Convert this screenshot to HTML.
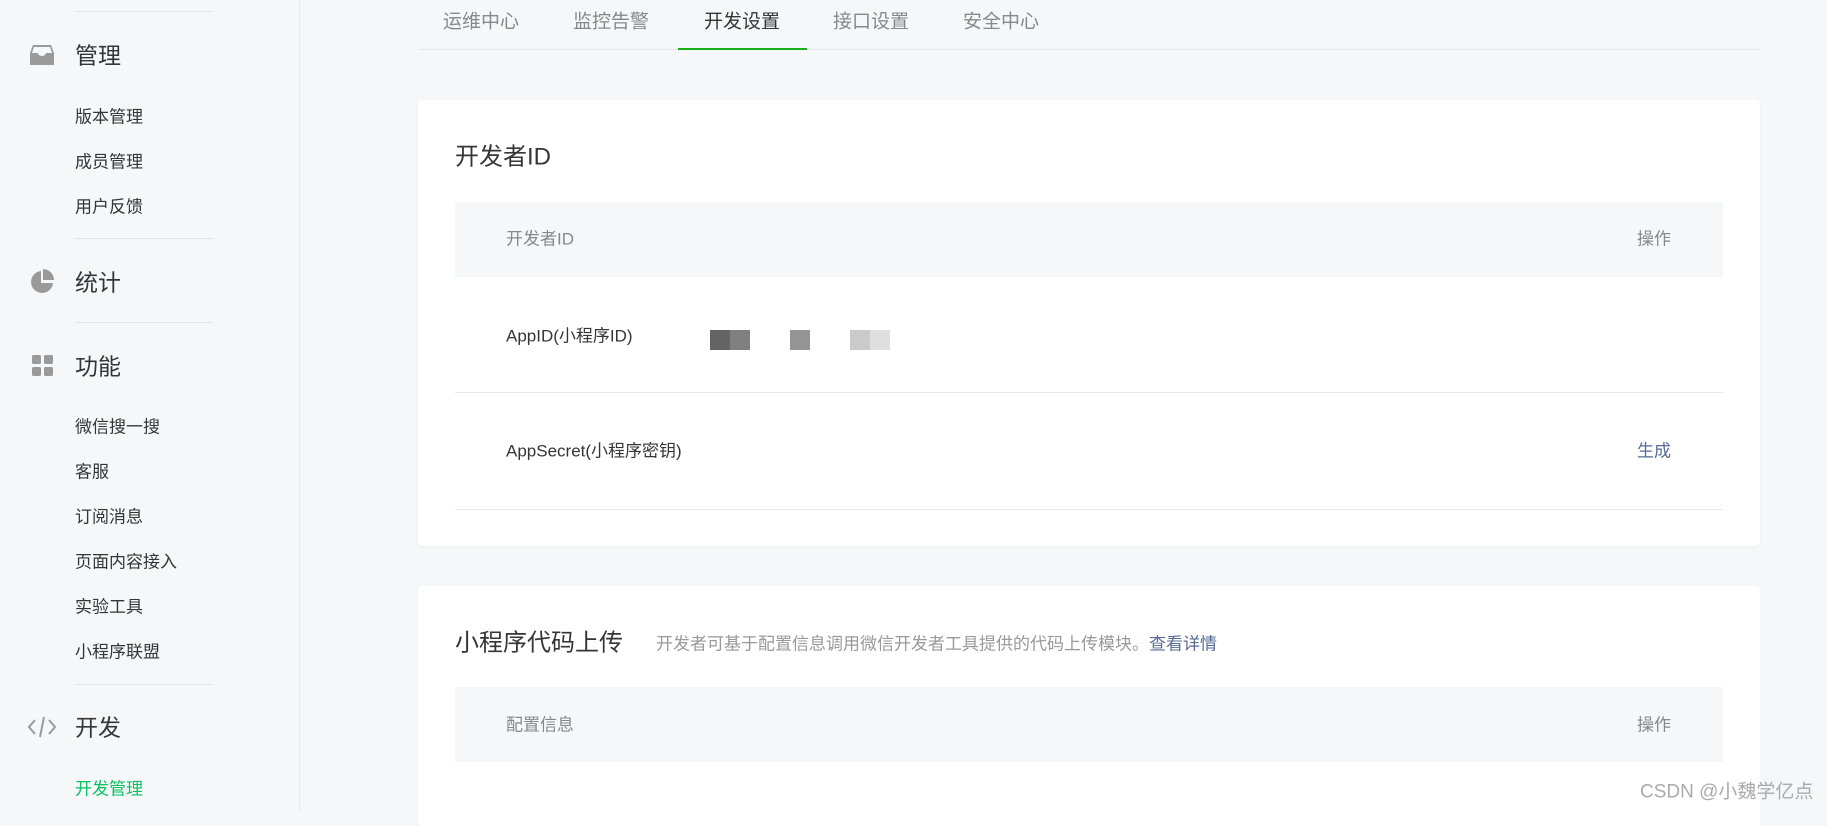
<!DOCTYPE html>
<html><head><meta charset="utf-8"><style>
*{margin:0;padding:0;box-sizing:border-box}
body{width:1827px;height:812px;overflow:hidden;background:#f6f7f9;font-family:"Liberation Sans","Noto Sans CJK SC",sans-serif;position:relative;color:#353535}
.a{position:absolute;white-space:nowrap}
.side{position:absolute;left:0;top:0;width:300px;height:812px;background:#f6f7f9;border-right:1px solid #e7e8eb}
.dv{position:absolute;left:75px;width:138px;height:1px;background:#e3e4e7}
.h{font-size:23px;color:#353535;transform:translateY(-54%)}
.s{font-size:17px;color:#353535;transform:translateY(-58%)}
.t{font-size:19px;color:#888;transform:translateY(-58%)}
.card{position:absolute;left:418px;width:1342px;background:#fff;border-radius:4px}
.thd{position:absolute;background:#f6f7f9}
.m{transform:translateY(-58%)}
</style></head><body>
<div class="side">
<div class="dv" style="top:11px"></div>
<svg class="a" style="left:30px;top:44px" width="24" height="22" viewBox="0 0 24 22"><path d="M3 1h18l3 8v12H0V9z" fill="#9a9a9a"/><path d="M4 3h16l2 6h-6a4 3 0 0 1-8 0H2z" fill="#f6f7f9"/></svg>
<div class="a h" style="left:75px;top:55px">管理</div>
<div class="a s" style="left:75px;top:117px">版本管理</div>
<div class="a s" style="left:75px;top:162px">成员管理</div>
<div class="a s" style="left:75px;top:207px">用户反馈</div>
<div class="dv" style="top:238px"></div>
<svg class="a" style="left:30px;top:269px" width="25" height="25" viewBox="0 0 25 25"><path d="M11 2A11 11 0 1 0 23 14H11z" fill="#9a9a9a"/><path d="M13 0A11 11 0 0 1 24 11H13z" fill="#9a9a9a"/></svg>
<div class="a h" style="left:75px;top:282px">统计</div>
<div class="dv" style="top:322px"></div>
<svg class="a" style="left:32px;top:355px" width="22" height="22"><rect x="0" y="0" width="9" height="9" rx="1.5" fill="#9a9a9a"/><rect x="12" y="0" width="9" height="9" rx="1.5" fill="#9a9a9a"/><rect x="0" y="12" width="9" height="9" rx="1.5" fill="#9a9a9a"/><rect x="12" y="12" width="9" height="9" rx="1.5" fill="#9a9a9a"/></svg>
<div class="a h" style="left:75px;top:366px">功能</div>
<div class="a s" style="left:75px;top:427px">微信搜一搜</div>
<div class="a s" style="left:75px;top:472px">客服</div>
<div class="a s" style="left:75px;top:517px">订阅消息</div>
<div class="a s" style="left:75px;top:562px">页面内容接入</div>
<div class="a s" style="left:75px;top:607px">实验工具</div>
<div class="a s" style="left:75px;top:652px">小程序联盟</div>
<div class="dv" style="top:684px"></div>
<svg class="a" style="left:27px;top:716px" width="30" height="22" viewBox="0 0 30 22" fill="none" stroke="#9a9a9a" stroke-width="2"><path d="M8 4L2 11l6 7M22 4l6 7-6 7M17 1l-4 20"/></svg>
<div class="a h" style="left:75px;top:727px">开发</div>
<div class="a s" style="left:75px;top:789px;color:#07c160">开发管理</div>
</div>
<div class="a t" style="left:443px;top:22px">运维中心</div>
<div class="a t" style="left:573px;top:22px">监控告警</div>
<div class="a t" style="left:704px;top:22px;color:#353535">开发设置</div>
<div class="a t" style="left:833px;top:22px">接口设置</div>
<div class="a t" style="left:963px;top:22px">安全中心</div>
<div class="a" style="left:418px;top:49px;width:1342px;height:1px;background:#e5e6e9"></div>
<div class="a" style="left:678px;top:48px;width:129px;height:2px;background:#1aad19"></div>
<div class="card" style="top:100px;height:446px;box-shadow:0 1px 2px rgba(0,0,0,.04)">
</div>
<div class="a m" style="left:455px;top:157px;font-size:24px">开发者ID</div>
<div class="thd" style="left:455px;top:202px;width:1268px;height:75px"></div>
<div class="a m" style="left:506px;top:239px;font-size:17px;color:#888">开发者ID</div>
<div class="a m" style="left:1637px;top:239px;font-size:17px;color:#888">操作</div>
<div class="a m" style="left:506px;top:336px;font-size:17px">AppID(小程序ID)</div>
<div class="a" style="left:710px;top:330px;width:20px;height:20px;background:#646464"></div>
<div class="a" style="left:730px;top:330px;width:20px;height:20px;background:#808080"></div>
<div class="a" style="left:790px;top:330px;width:20px;height:20px;background:#959595"></div>
<div class="a" style="left:850px;top:330px;width:20px;height:20px;background:#cbcbcb"></div>
<div class="a" style="left:870px;top:330px;width:20px;height:20px;background:#dedede"></div>
<div class="a" style="left:455px;top:392px;width:1268px;height:1px;background:#e7e7eb"></div>
<div class="a m" style="left:506px;top:451px;font-size:17px">AppSecret(小程序密钥)</div>
<div class="a m" style="left:1637px;top:451px;font-size:17px;color:#576b95">生成</div>
<div class="a" style="left:455px;top:509px;width:1268px;height:1px;background:#e7e7eb"></div>
<div class="card" style="top:586px;height:240px"></div>
<div class="a m" style="left:455px;top:643px;font-size:24px">小程序代码上传</div>
<div class="a m" style="left:656px;top:644px;font-size:17px;color:#999">开发者可基于配置信息调用微信开发者工具提供的代码上传模块。<span style="color:#576b95">查看详情</span></div>
<div class="thd" style="left:455px;top:687px;width:1268px;height:75px"></div>
<div class="a m" style="left:506px;top:725px;font-size:17px;color:#888">配置信息</div>
<div class="a m" style="left:1637px;top:725px;font-size:17px;color:#888">操作</div>
<div class="a m" style="left:1640px;top:792px;font-size:19px;color:#aaa">CSDN @小魏学亿点</div>
</body></html>
